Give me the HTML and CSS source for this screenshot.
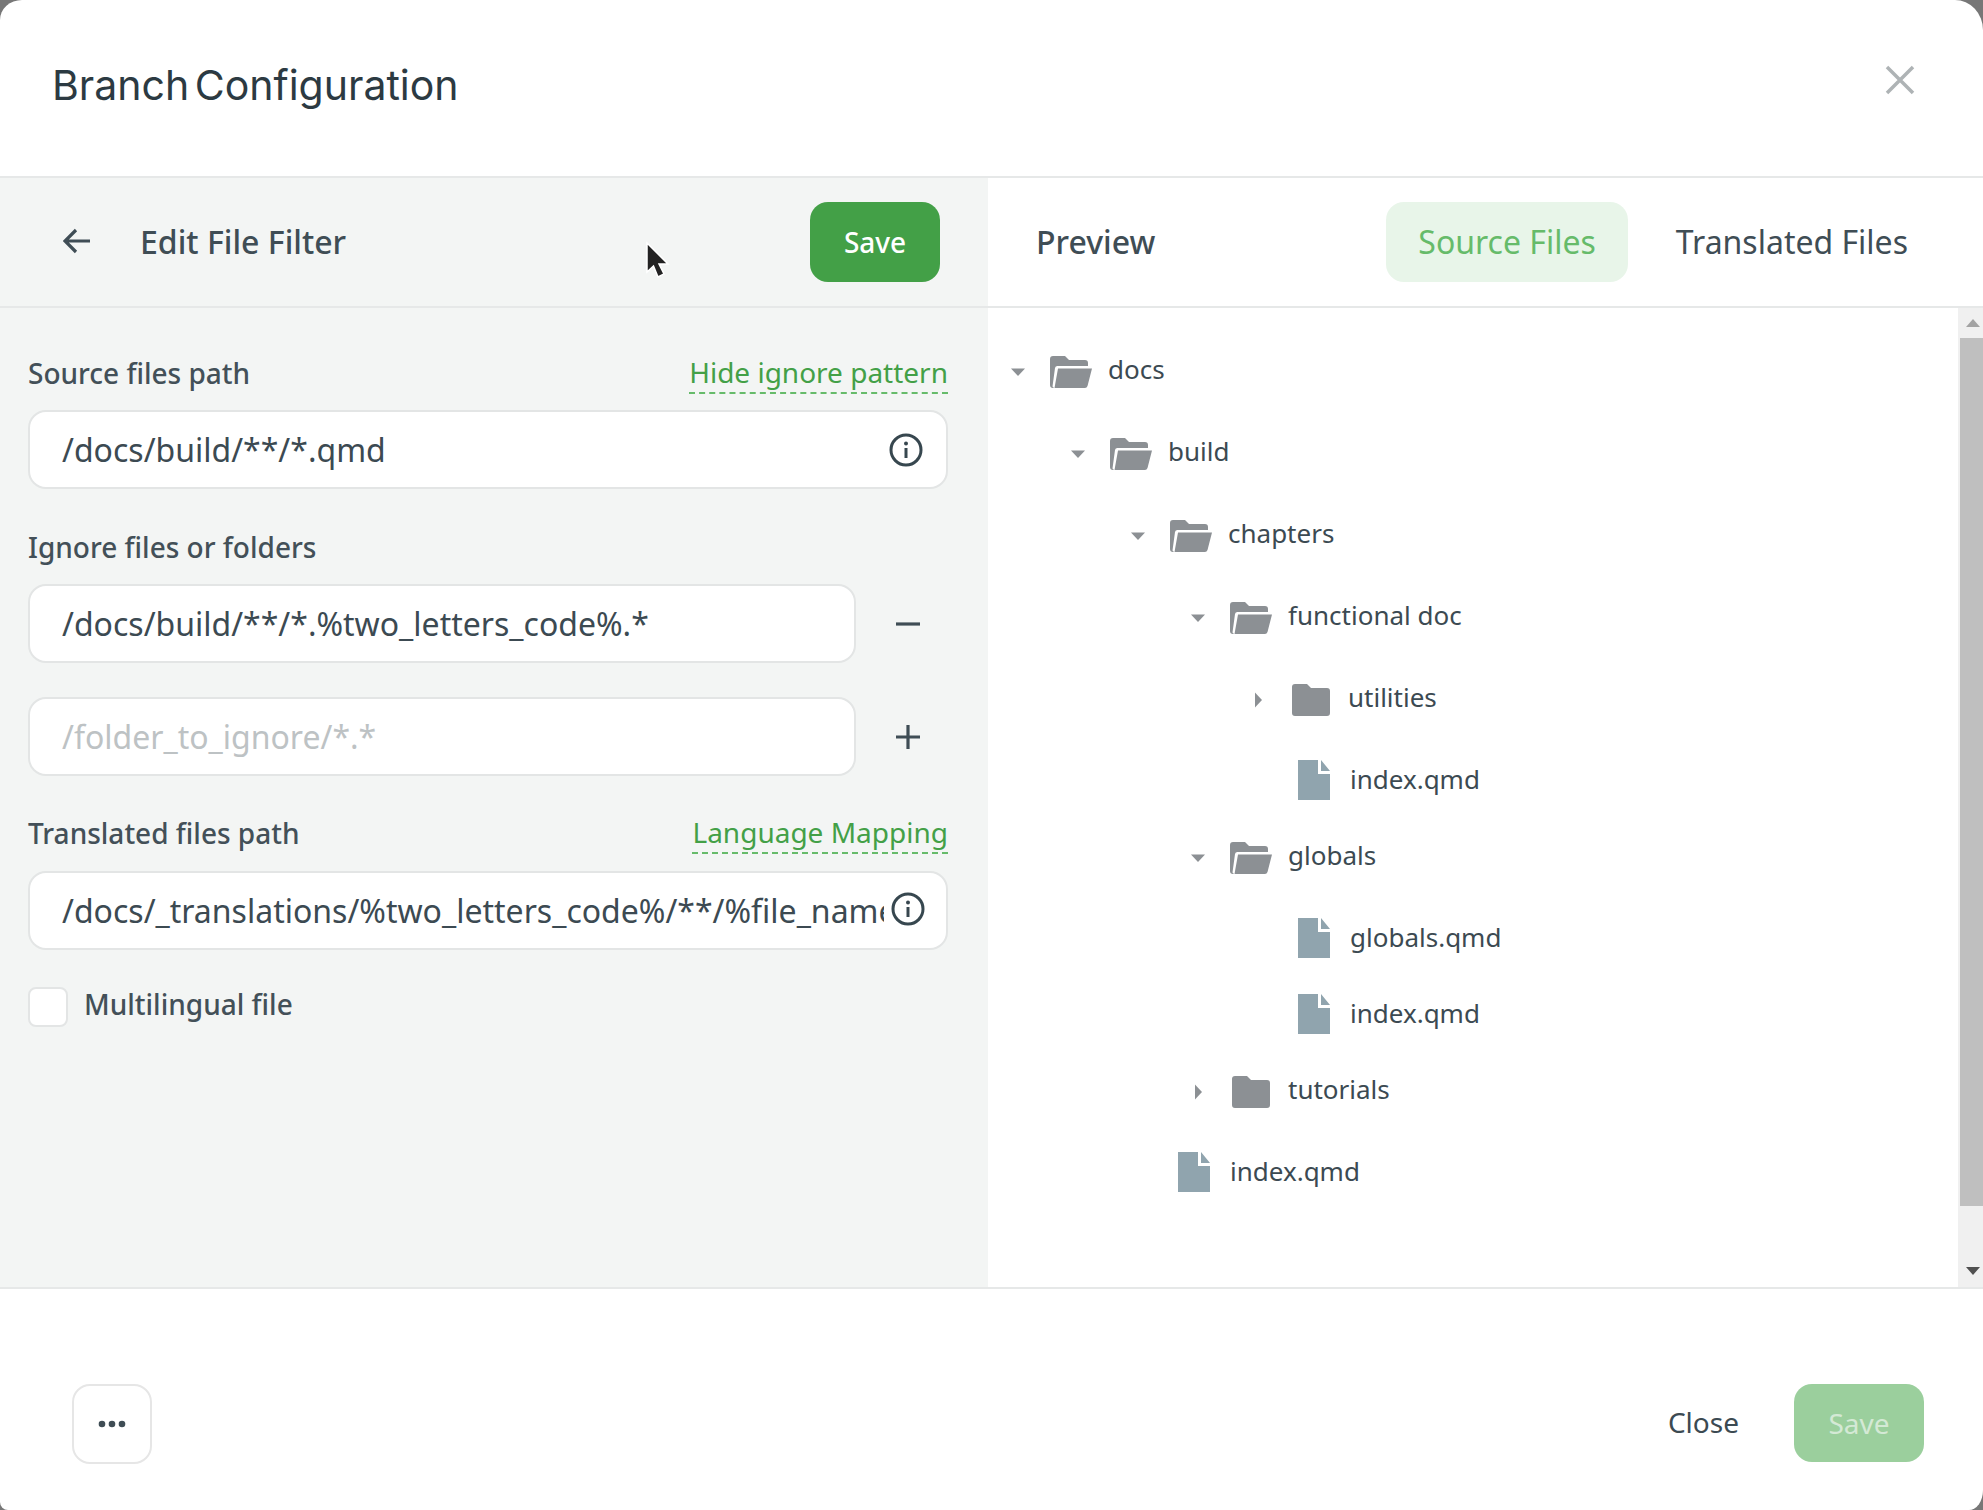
FILE: index.html
```html
<!DOCTYPE html>
<html lang="en">
<head>
<meta charset="utf-8">
<title>Branch Configuration</title>
<link rel="stylesheet" href="styles.css">
</head>
<body>
<div class="dialog">
  <header class="dialog-head">
    <h1 class="dialog-title">Branch Configuration</h1>
    <button class="close-x" aria-label="Close"><svg width="30" height="30" viewBox="0 0 30 30"><path d="M2 2L28 28M28 2L2 28" stroke="#aeb3b5" stroke-width="3.5" fill="none"/></svg></button>
  </header>
  <main class="dialog-body">
    <section class="editor">
      <div class="panel-bar editor-bar">
        <svg class="back" width="28" height="26" viewBox="0 0 28 26"><path d="M27 13H3M13 2L2 13L13 24" stroke="#3f4d55" stroke-width="3.2" fill="none"/></svg>
        <h2 class="panel-title edit-title">Edit File Filter</h2>
        <button class="btn btn-save">Save</button>
      </div>
      <form class="form">
        <div class="label-row"><label class="label">Source files path</label><a class="link link-hide">Hide ignore pattern</a></div>
        <div class="field"><input class="input input-wide" value="/docs/build/**/*.qmd"><svg class="info" width="34" height="34" viewBox="0 0 34 34"><circle cx="17" cy="17" r="15" fill="none" stroke="#37474f" stroke-width="3"/><circle cx="17" cy="10.500" r="2" fill="#37474f"/><path d="M17 15V25" stroke="#37474f" stroke-width="3"/></svg></div>

        <div class="label-row label-row-2"><label class="label">Ignore files or folders</label></div>
        <div class="ignore-row"><input class="input input-short" value="/docs/build/**/*.%two_letters_code%.*"><svg class="sign" width="26" height="26" viewBox="0 0 26 26"><path d="M1 13H25" stroke="#3f4d55" stroke-width="3.2"/></svg></div>
        <div class="ignore-row ignore-row-2"><input class="input input-short" placeholder="/folder_to_ignore/*.*"><svg class="sign" width="26" height="26" viewBox="0 0 26 26"><path d="M1 13H25M13 1V25" stroke="#3f4d55" stroke-width="3.2"/></svg></div>

        <div class="label-row label-row-3"><label class="label">Translated files path</label><a class="link link-lang">Language Mapping</a></div>
        <div class="field"><input class="input input-wide input-clip" value="/docs/_translations/%two_letters_code%/**/%file_name%.%file_extension%"><svg class="info info-2" width="34" height="34" viewBox="0 0 34 34"><circle cx="17" cy="17" r="15" fill="none" stroke="#37474f" stroke-width="3"/><circle cx="17" cy="10.500" r="2" fill="#37474f"/><path d="M17 15V25" stroke="#37474f" stroke-width="3"/></svg></div>

        <label class="check-row"><span class="checkbox"></span><span class="check-text">Multilingual file</span></label>
      </form>
    </section>
    <section class="preview">
      <div class="panel-bar preview-bar">
        <h2 class="panel-title">Preview</h2>
        <div class="tabs">
          <button class="tab tab-active">Source Files</button>
          <button class="tab">Translated Files</button>
        </div>
      </div>
      <div class="tree-wrap">
        <ul class="tree">
          <li class="row folder d0"><svg class="twisty" width="24" height="24" viewBox="0 0 24 24"><use href="#caret-down"/></svg><svg class="ic" width="42" height="32"><use href="#folder-open"/></svg><span class="name">docs</span></li>
          <li class="row folder d1"><svg class="twisty" width="24" height="24" viewBox="0 0 24 24"><use href="#caret-down"/></svg><svg class="ic" width="42" height="32"><use href="#folder-open"/></svg><span class="name">build</span></li>
          <li class="row folder d2"><svg class="twisty" width="24" height="24" viewBox="0 0 24 24"><use href="#caret-down"/></svg><svg class="ic" width="42" height="32"><use href="#folder-open"/></svg><span class="name">chapters</span></li>
          <li class="row folder d3"><svg class="twisty" width="24" height="24" viewBox="0 0 24 24"><use href="#caret-down"/></svg><svg class="ic" width="42" height="32"><use href="#folder-open"/></svg><span class="name">functional doc</span></li>
          <li class="row folder d4"><svg class="twisty" width="24" height="24" viewBox="0 0 24 24"><use href="#caret-right"/></svg><svg class="ic" width="42" height="32"><use href="#folder-closed"/></svg><span class="name">utilities</span></li>
          <li class="row file d4"><svg class="ic-file" width="32" height="40"><use href="#file"/></svg><span class="name">index.qmd</span></li>
          <li class="row folder d3"><svg class="twisty" width="24" height="24" viewBox="0 0 24 24"><use href="#caret-down"/></svg><svg class="ic" width="42" height="32"><use href="#folder-open"/></svg><span class="name">globals</span></li>
          <li class="row file d4"><svg class="ic-file" width="32" height="40"><use href="#file"/></svg><span class="name">globals.qmd</span></li>
          <li class="row file d4"><svg class="ic-file" width="32" height="40"><use href="#file"/></svg><span class="name">index.qmd</span></li>
          <li class="row folder d3"><svg class="twisty" width="24" height="24" viewBox="0 0 24 24"><use href="#caret-right"/></svg><svg class="ic" width="42" height="32"><use href="#folder-closed"/></svg><span class="name">tutorials</span></li>
          <li class="row file d2"><svg class="ic-file" width="32" height="40"><use href="#file"/></svg><span class="name">index.qmd</span></li>
        </ul>
        <div class="scrollbar">
          <svg class="arrow arrow-up" width="14" height="8" viewBox="0 0 14 8"><path d="M7 0L14 8H0Z" fill="#a3a3a3"/></svg>
          <div class="thumb"></div>
          <svg class="arrow arrow-down" width="14" height="8" viewBox="0 0 14 8"><path d="M0 0H14L7 8Z" fill="#505050"/></svg>
        </div>
      </div>
    </section>
  </main>
  <footer class="dialog-foot">
    <button class="btn-more" aria-label="More"><svg width="28" height="8" viewBox="0 0 28 8"><circle cx="4" cy="4" r="3.300" fill="#3f4d55"/><circle cx="14" cy="4" r="3.300" fill="#3f4d55"/><circle cx="24" cy="4" r="3.300" fill="#3f4d55"/></svg></button>
    <div class="foot-actions">
      <button class="btn-close">Close</button>
      <button class="btn btn-disabled">Save</button>
    </div>
  </footer>
  <svg class="cursor" width="28" height="40" viewBox="0 0 28 40"><path d="M3 2V31L9.500 25L14 36L20 33L15 23H24Z" fill="#222" stroke="#fff" stroke-width="1.500"/></svg>
</div>
<svg class="defs" width="0" height="0">
  <defs>
    <path id="caret-down" d="M5 8.500H19L12 16Z" fill="#8c9094"/>
    <path id="caret-right" d="M9 4.500L16 12L9 19.500Z" fill="#8c9094"/>
    <path id="folder-open" fill-rule="evenodd" fill="#8c9094" d="M3 0H15L19 4H35A3 3 0 0 1 38 7V10H7.500A2.500 2.500 0 0 0 5 12L2.500 30.500L4 32H3A3 3 0 0 1 0 29V3A3 3 0 0 1 3 0ZM8 12.500H42L37.500 30A3 3 0 0 1 34.500 32H4.500Z"/>
    <path id="folder-closed" fill="#8c9094" d="M5 0H17L21 4H37A3 3 0 0 1 40 7V29A3 3 0 0 1 37 32H5A3 3 0 0 1 2 29V3A3 3 0 0 1 5 0Z"/>
    <path id="file" fill="#90a4ae" d="M0 0H20V14H32V40H0ZM23 0L32 11H23Z"/>
  </defs>
</svg>
</body>
</html>
```

FILE: styles.css
```css
* { box-sizing: border-box; }
html, body { margin: 0; height: 100%; }
body {
  background: #777;
  font-family: "Noto Sans", sans-serif;
  color: #3c4a52;
}
button, input { font-family: inherit; }
h1, h2 { margin: 0; font-weight: 400; }
ul { margin: 0; padding: 0; list-style: none; }

.dialog {
  position: relative;
  width: 1983px;
  height: 1510px;
  background: #fff;
  border-radius: 22px 28px 14px 8px / 20px 30px 20px 8px;
  overflow: hidden;
  display: flex;
  flex-direction: column;
}
.dialog-head {
  height: 178px;
  flex: none;
  display: flex;
  align-items: flex-start;
  justify-content: space-between;
  border-bottom: 2px solid #e6e8e8;
  padding: 60px 68px 0 52px;
}
.dialog-title {
  font-family: "Inter", sans-serif;
  font-size: 41px;
  line-height: 50px;
  word-spacing: -6px;
  color: #2c3a42;
}
.close-x { border: 0; background: none; padding: 0; margin-top: 5px; height: 30px; }

.dialog-body { flex: 1; display: flex; min-height: 0; }
.editor { width: 988px; flex: none; background: #f3f5f4; }
.preview { flex: 1; min-width: 0; display: flex; flex-direction: column; }

.panel-bar {
  height: 130px;
  display: flex;
  align-items: center;
  border-bottom: 2px solid #e6e8e8;
  flex: none;
}
.editor-bar { padding: 0 48px 0 63px; }
.back { margin-right: 49px; margin-bottom: 2px; }
.panel-title { font-size: 32px; font-weight: 500; color: #3f4d55; margin-bottom: 2px; }
.edit-title { flex: 1; }
.btn {
  width: 130px;
  height: 80px;
  border: 0;
  border-radius: 18px;
  font-size: 28px;
  font-weight: 500;
}
.btn-save { background: #43a047; color: #fff; }
.btn-disabled { background: #9bcf9d; color: #d4e9d5; height: 78px; font-weight: 400; }

.form { padding: 47px 40px 0 28px; }
.label-row { display: flex; justify-content: space-between; align-items: flex-end; height: 36px; margin-bottom: 19px; }
.label-row-2 { margin-top: 40px; }
.label-row-3 { margin-top: 39px; margin-bottom: 20px; }
.label { font-size: 28px; font-weight: 500; line-height: 36px; color: #435058; }
.link {
  font-size: 28px;
  line-height: 36px;
  color: #43a047;
  border-bottom: 2px dashed #66bb6a;
  height: 40px;
  margin-bottom: -3px;
}
.field { position: relative; width: 920px; }
.input {
  display: block;
  height: 79px;
  border: 2px solid #e3e5e5;
  border-radius: 18px;
  background: #fff;
  font-size: 32px;
  color: #3c4a52;
  padding: 0 32px;
  outline: none;
}
.input::placeholder { color: #bdc2c4; opacity: 1; }
.input-wide { width: 100%; }
.input-clip { padding-right: 62px; }
.input-short { width: 828px; }
.info { position: absolute; right: 25px; top: 23px; }
.info-2 { right: 23px; top: 21px; }
.ignore-row { display: flex; align-items: center; width: 920px; }
.ignore-row-2 { margin-top: 34px; }
.sign { margin-left: 39px; }
.check-row { display: flex; align-items: center; gap: 16px; margin-top: 35px; }
.checkbox { width: 40px; height: 40px; background: #fff; border: 2px solid #e3e5e5; border-radius: 8px; }
.check-text { font-size: 28px; font-weight: 500; color: #435058; margin-bottom: 5px; }

.preview-bar { padding: 0 0 0 48px; justify-content: space-between; }
.tabs { display: flex; align-items: center; padding-right: 43px; gap: 16px; }
.tab {
  height: 80px;
  border: 0;
  background: none;
  border-radius: 18px;
  font-size: 32px;
  padding: 0 32px 2px;
  color: #3f4d55;
}
.tab-active { background: #e8f5e9; color: #66bb6a; }

.tree-wrap { flex: 1; display: flex; min-height: 0; position: relative; }
.tree { flex: 1; padding: 23px 0 0 18px; }
.row { display: flex; align-items: center; height: 76px; }
.row.folder { margin-bottom: 6px; }
.d1 { padding-left: 60px; }
.d2 { padding-left: 120px; }
.d3 { padding-left: 180px; }
.d4 { padding-left: 240px; }
.twisty { flex: none; margin: 6px 20px 0 0; }
.ic { flex: none; margin: 6px 16px 0 0; }
.ic-file { flex: none; margin: 2px 20px 0 52px; }
.name { font-size: 26px; line-height: 36px; color: #3c4a52; }

.scrollbar {
  width: 25px;
  flex: none;
  background: #f0f0f0;
  display: flex;
  flex-direction: column;
  align-items: flex-end;
  padding-top: 11px;
  padding-bottom: 12px;
}
.arrow { flex: none; margin-right: 3px; }
.thumb { width: 23px; height: 868px; background: #bfbfbf; margin-top: 11px; margin-bottom: auto; }

.dialog-foot {
  height: 223px;
  flex: none;
  border-top: 2px solid #e6e8e8;
  display: flex;
  align-items: flex-start;
  justify-content: space-between;
  padding: 95px 59px 0 72px;
}
.btn-more {
  width: 80px;
  height: 80px;
  border: 2px solid #e6e6e6;
  border-radius: 18px;
  background: #fff;
  padding: 0;
  display: flex;
  align-items: center;
  justify-content: center;
}
.foot-actions { display: flex; align-items: center; gap: 55px; }
.btn-close { border: 0; background: none; padding: 0 0 2px; font-size: 28px; color: #3c4a52; }
.cursor { position: absolute; left: 644px; top: 241px; }
.defs { position: absolute; }
```
